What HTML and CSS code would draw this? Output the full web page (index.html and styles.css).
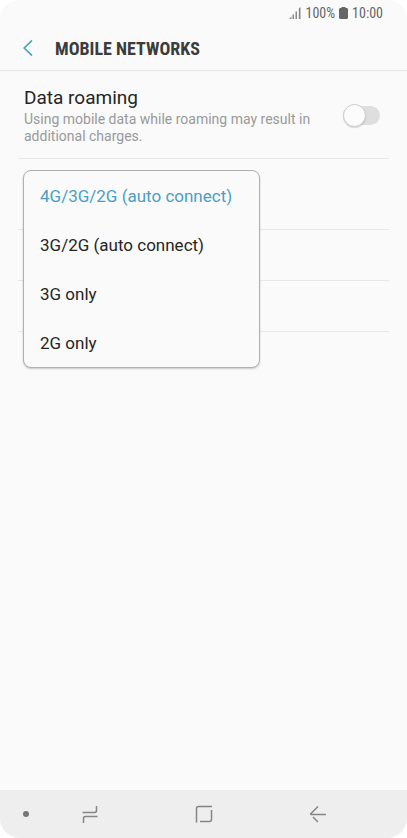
FILE: index.html
```html
<!DOCTYPE html>
<html lang="en">
<head>
<meta charset="utf-8">
<meta name="viewport" content="width=device-width, initial-scale=1">
<title>Mobile networks</title>
<link rel="stylesheet" href="styles.css">
</head>
<body>
<div class="screen">
  <header class="header">
    <div class="status">
      <svg class="signal" width="12" height="12" viewBox="0 0 12 12" aria-hidden="true"><path d="M0 12l2.500-2.500V12zM3.500 7.500h1.500V12H3.500zM6.500 4.500H8V12H6.500zM9.800 1.500L11.500 0v12H9.800z"/></svg>
      <span>100%</span>
      <svg class="battery" width="9" height="12" viewBox="0 0 9 12" aria-hidden="true"><path d="M2.500 0h4v1H8l1 1v9l-1 1H1l-1-1V2l1-1h1.500z"/></svg>
      <span>10:00</span>
    </div>
    <div class="titlebar">
      <button class="back" type="button" aria-label="Back">
        <svg width="10" height="16" viewBox="0 0 10 16"><path d="M9 .5L1.200 8L9 15.500"/></svg>
      </button>
      <h1 class="title">MOBILE NETWORKS</h1>
    </div>
  </header>
  <main class="settings">
    <div class="row roaming">
      <label class="text" for="roaming">
        <span class="name">Data roaming</span>
        <span class="hint">Using mobile data while roaming may result in additional charges.</span>
      </label>
      <input class="switch" type="checkbox" role="switch" id="roaming">
    </div>
    <div class="row mode">
      <div class="menu" role="listbox" aria-label="Network mode">
        <button class="option selected" type="button" role="option" aria-selected="true">4G/3G/2G (auto connect)</button>
        <button class="option" type="button" role="option" aria-selected="false">3G/2G (auto connect)</button>
        <button class="option" type="button" role="option" aria-selected="false">3G only</button>
        <button class="option" type="button" role="option" aria-selected="false">2G only</button>
      </div>
    </div>
    <div class="row plain"></div>
    <div class="row plain"></div>
  </main>
  <nav class="navbar">
    <button class="key" type="button" aria-label="Hide navigation bar"><svg class="dot" width="6" height="6" viewBox="0 0 6 6"><circle cx="3" cy="3" r="3"/></svg></button>
    <button class="key" type="button" aria-label="Recent apps"><svg width="18" height="18" viewBox="0 0 18 18"><path d="M1.500 7.500h12q2 0 2-2V1M16.500 11.500h-12q-2 0-2 2V18"/></svg></button>
    <button class="key" type="button" aria-label="Home"><svg width="18" height="18" viewBox="0 0 18 18"><path d="M1.500 17.500V3.500q0-2 2-2H17M16.500 5v9.500q0 2-2 2H5"/></svg></button>
    <button class="key" type="button" aria-label="Back"><svg width="18" height="18" viewBox="0 0 18 18"><path d="M9 1.500L2 8.500q-.6.700 0 1H17M4 12l5 5"/></svg></button>
  </nav>
</div>
</body>
</html>
```
FILE: styles.css
```css
* {
  box-sizing: border-box;
}

body {
  margin: 0;
  background: #fff;
  color: #252525;
  font-family: Roboto, "Liberation Sans", sans-serif;
}

button {
  padding: 0;
  border: 0;
  background: none;
  font: inherit;
  color: inherit;
}

svg {
  display: block;
}

.screen {
  display: flex;
  flex-direction: column;
  min-height: 100vh;
  overflow: hidden;
  border-radius: 20px;
  background: #fafafa;
}

.header {
  border-bottom: 1px solid #e6e6e6;
}

.status {
  display: flex;
  align-items: center;
  justify-content: flex-end;
  gap: 4px;
  height: 26px;
  padding-right: 24px;
  color: #666;
  font-family: "Roboto Condensed", Roboto, sans-serif;
  font-size: 14px;
}

.signal {
  fill: #888;
}

.battery {
  fill: #666;
}

.titlebar {
  display: flex;
  align-items: center;
  height: 44px;
}

.back {
  display: flex;
  align-items: center;
  justify-content: center;
  width: 55px;
  height: 44px;
}

.back path {
  fill: none;
  stroke: #4a9fc5;
  stroke-width: 1.7;
}

.title {
  margin: 0;
  color: #3c3c3c;
  font-family: "Roboto Condensed", Roboto, sans-serif;
  font-size: 18px;
  font-weight: 700;
  white-space: nowrap;
}

.settings {
  flex: 1;
  padding: 0 18px;
}

.row {
  border-bottom: 1px solid #e8e8e8;
}

.roaming {
  display: flex;
  align-items: center;
  gap: 16px;
  padding: 14px 9px 13px 6px;
}

.text {
  flex: 1;
}

.name,
.hint {
  display: block;
}

.name {
  font-size: 19px;
  line-height: 26px;
}

.hint {
  color: #999;
  font-size: 14px;
  line-height: 17px;
}

.switch {
  appearance: none;
  display: flex;
  align-items: center;
  width: 37px;
  height: 19px;
  margin: 0;
  border-radius: 10px;
  background: #dedede;
}

.switch::before {
  content: "";
  width: 21px;
  height: 21px;
  flex: none;
  border: 1px solid #ccc;
  border-radius: 50%;
  background: #fcfcfc;
  box-shadow: 0 1px 1px #0002;
}

.mode {
  position: relative;
  height: 71px;
}

.menu {
  position: absolute;
  top: 11px;
  left: 5px;
  width: 237px;
  border: 1px solid #b0b0b0;
  border-radius: 8px;
  background: #fafafa;
  box-shadow: 0 1px 2px #0003;
}

.option {
  display: block;
  width: 100%;
  height: 49px;
  padding: 0 16px;
  font-size: 17px;
  text-align: left;
  white-space: nowrap;
}

.selected {
  color: #4a9fc5;
}

.plain {
  height: 51px;
}

.navbar {
  display: grid;
  grid-template-columns: 52px 1fr 2fr 1fr 51px;
  height: 48px;
  background: #eee;
}

.key {
  display: flex;
  align-items: center;
  justify-content: center;
}

.key path {
  fill: none;
  stroke: #858585;
  stroke-width: 1.5;
}

.dot {
  fill: #777;
}
```
